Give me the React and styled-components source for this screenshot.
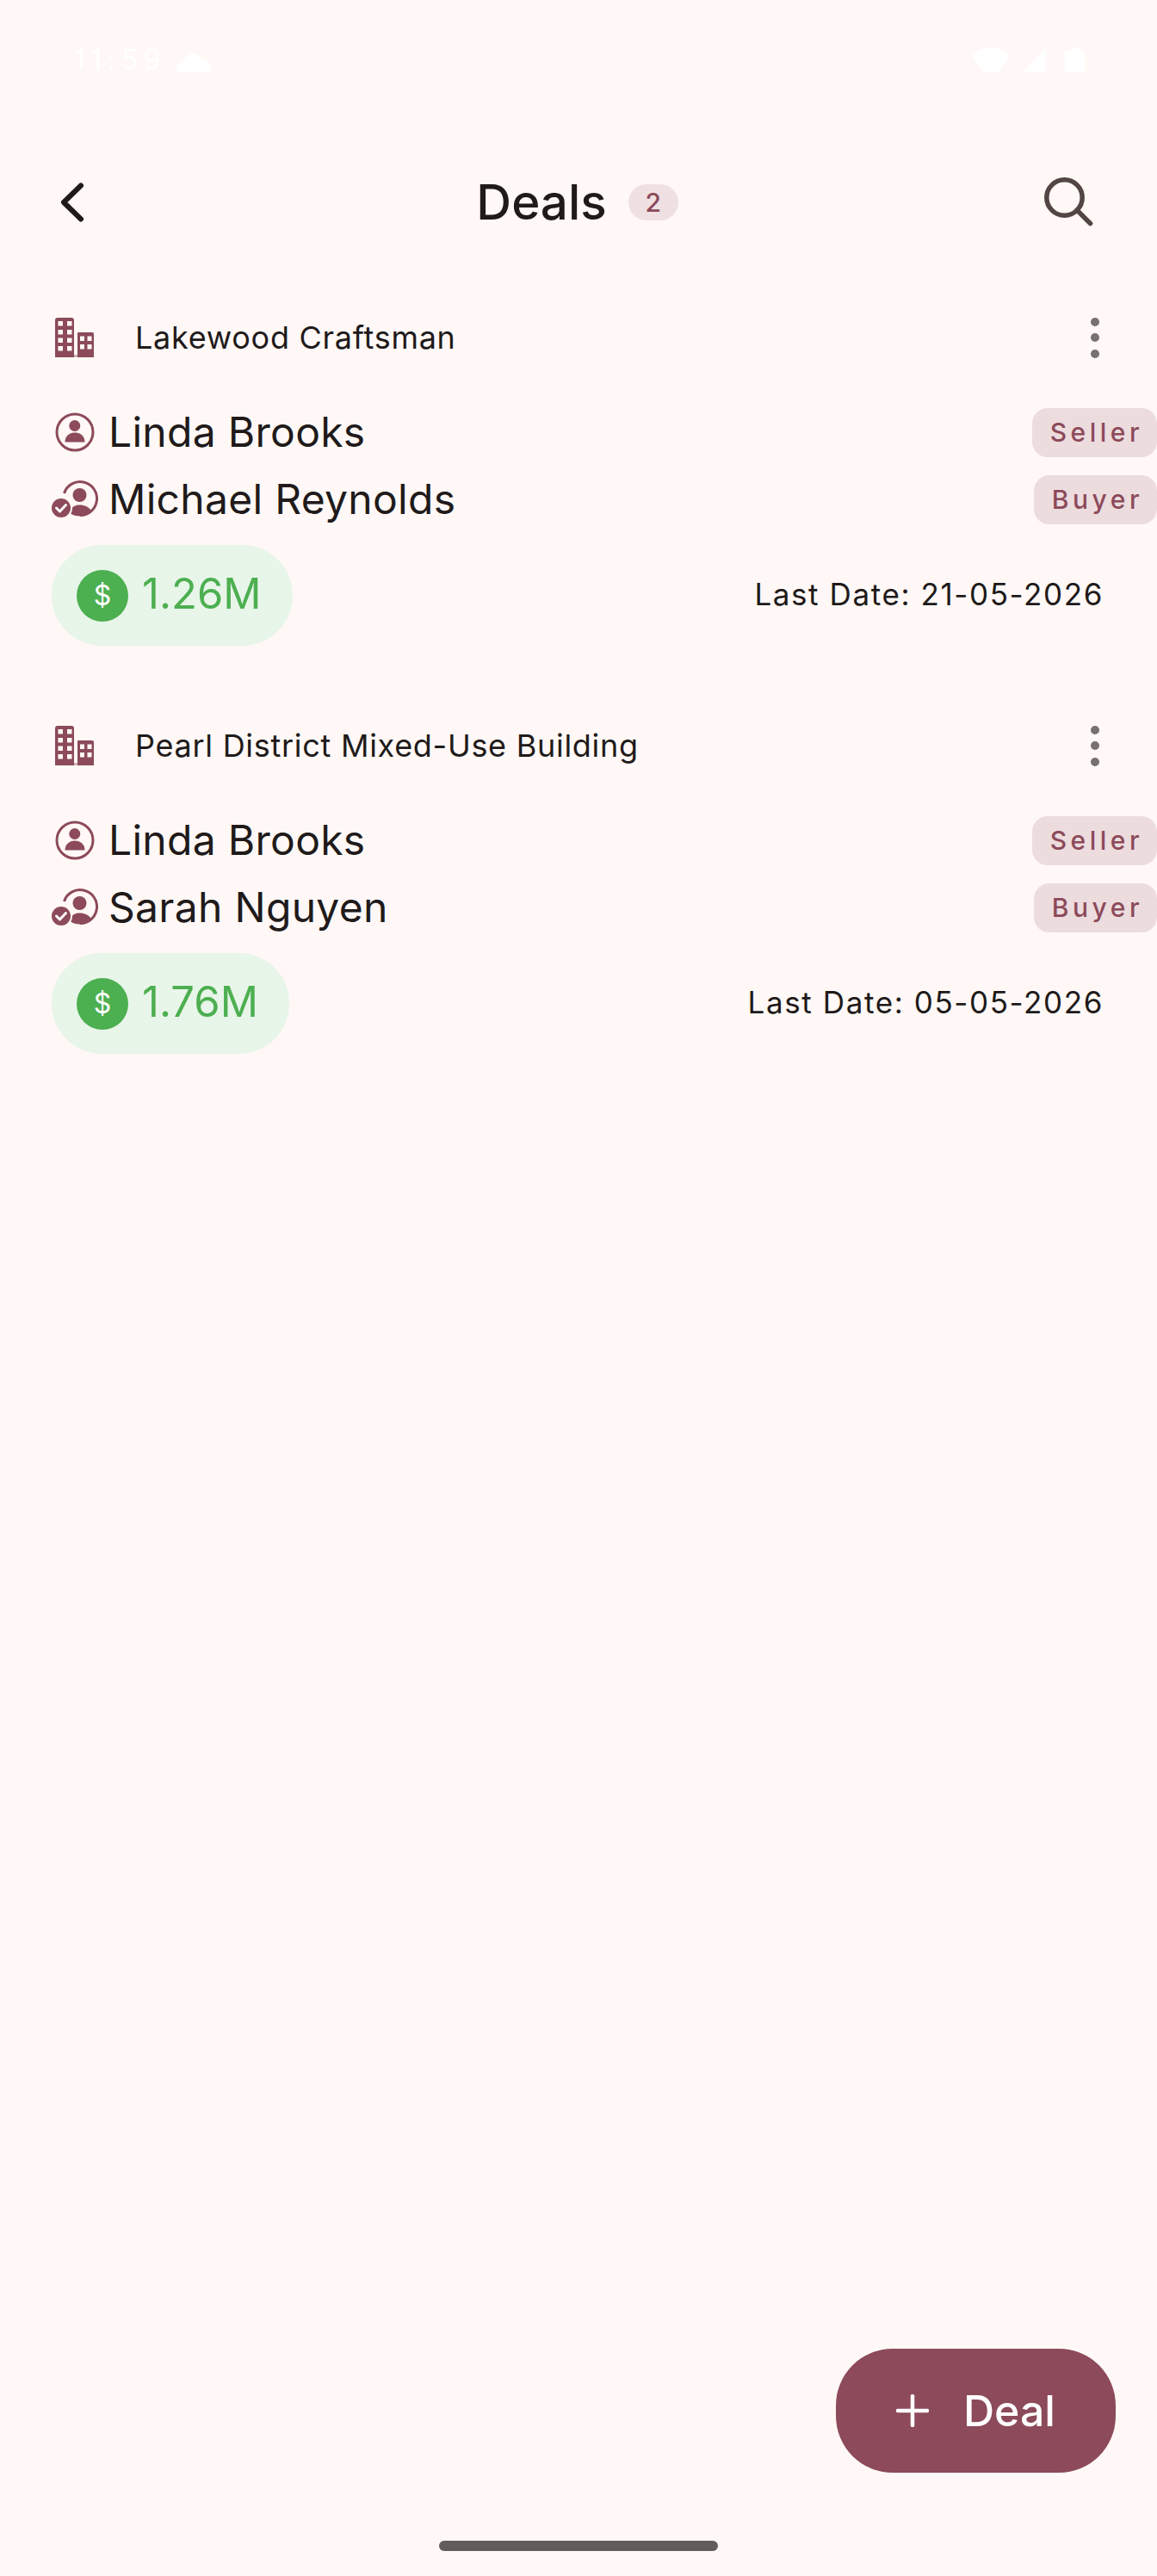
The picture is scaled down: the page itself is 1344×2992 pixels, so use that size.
import React from "react";
import styled, { createGlobalStyle } from "styled-components";

const GlobalStyle = createGlobalStyle`
  html, body {
    margin: 0;
    padding: 0;
    background: #fff8f6;
  }
  * {
    box-sizing: border-box;
  }
`;

const Page = styled.main`
  position: relative;
  width: 1344px;
  height: 2992px;
  overflow: hidden;
  display: flex;
  flex-direction: column;
  background: #fff8f6;
  color: #201a1a;
  font-family: Inter, "Noto Sans", sans-serif;
`;

const StatusBar = styled.div`
  height: 187px;
  padding: 55px 84px 0 86px;
  display: flex;
  justify-content: space-between;
  align-items: flex-start;
  color: #ffffff;
`;

const StatusGroup = styled.div`
  display: flex;
  align-items: flex-end;
  gap: ${(props) => props.$gap}px;
  height: 29px;
`;

const StatusTime = styled.span`
  font-size: 32px;
  letter-spacing: 6.5px;
  line-height: 29px;
`;

const Header = styled.header`
  height: 96px;
  padding: 0 73px 0 70px;
  display: grid;
  grid-template-columns: 1fr auto 1fr;
  align-items: center;
`;

const HeaderEnd = styled.div`
  display: flex;
  justify-content: ${(props) => (props.$end ? "flex-end" : "flex-start")};
`;

const TitleGroup = styled.div`
  display: flex;
  align-items: center;
  gap: 25px;
`;

const Title = styled.h1`
  margin: 0;
  font-size: 56.5px;
  font-weight: 500;
  line-height: 70px;
`;

const CountBadge = styled.span`
  width: 58px;
  height: 42px;
  border-radius: 21px;
  background: #efe0e2;
  color: #8c4a5a;
  display: flex;
  align-items: center;
  justify-content: center;
  font-size: 30px;
  font-weight: 500;
`;

const DealList = styled.section`
  margin-top: 79px;
  display: flex;
  flex-direction: column;
  gap: 86px;
`;

const Deal = styled.article`
  display: flex;
  flex-direction: column;
`;

const DealTitleRow = styled.div`
  height: 60px;
  padding: 0 67px 0 64px;
  display: flex;
  align-items: center;
`;

const DealName = styled.span`
  flex: 1;
  margin-left: 47px;
  font-size: 36px;
  letter-spacing: 0.72px;
`;

const MoreDots = styled.span`
  display: flex;
  flex-direction: column;
  gap: 8.5px;

  i {
    display: block;
    width: 10px;
    height: 10px;
    border-radius: 50%;
    background: #79716f;
  }
`;

const People = styled.div`
  margin-top: 41px;
  display: flex;
  flex-direction: column;
`;

const PersonRow = styled.div`
  height: 78px;
  display: flex;
  align-items: center;
`;

const PersonIconSlot = styled.span`
  width: 126px;
  padding-left: ${(props) => props.$inset}px;
  display: flex;
  align-items: center;
`;

const PersonName = styled.span`
  flex: 1;
  font-size: 48px;
  line-height: 60px;
  letter-spacing: 0.3px;
`;

const RoleBadge = styled.span`
  height: 57px;
  padding: 0 16px 0 21px;
  border-radius: 18px;
  background: #ecdcde;
  color: #8c4a5a;
  display: flex;
  align-items: center;
  font-size: 30px;
  font-weight: 500;
  letter-spacing: 4.5px;
`;

const DealFooter = styled.div`
  margin-top: 14px;
  padding: 0 62px 0 60px;
  display: flex;
  justify-content: space-between;
  align-items: center;
`;

const AmountPill = styled.div`
  height: 117px;
  padding: 0 36px 0 29px;
  border-radius: 58px;
  background: #e8f5e9;
  color: #4caf50;
  display: flex;
  align-items: center;
  gap: 16px;
  font-size: 49px;
`;

const AmountValue = styled.span`
  position: relative;
  top: -2px;
`;

const DollarCircle = styled.span`
  width: 60px;
  height: 60px;
  border-radius: 50%;
  background: #4caf50;
  color: #ffffff;
  display: flex;
  align-items: center;
  justify-content: center;
  font-size: 32px;
`;

const LastDate = styled.span`
  position: relative;
  top: -2px;
  font-size: 35px;
  letter-spacing: 1.6px;
`;

const Fab = styled.button`
  position: absolute;
  right: 48px;
  bottom: 120px;
  width: 325px;
  height: 144px;
  border: 0;
  border-radius: 66px;
  background: #8c4a5a;
  color: #ffffff;
  font-family: inherit;
  font-size: 50px;
  font-weight: 500;
  display: flex;
  align-items: center;
  justify-content: center;
  gap: 40px;
`;

const HomeBar = styled.div`
  position: absolute;
  left: 510px;
  bottom: 29px;
  width: 324px;
  height: 12px;
  border-radius: 6px;
  background: #625d5c;
`;

const Cloud = () => (
  <svg width="41" height="22" viewBox="0 0 41 22" fill="currentColor">
    <path d="M5 22a5 5 0 0 1-1-9.800C5 11 7 10 9 10 11 4 15 0 20 0c5 0 9 3 10.500 8 1-.5 2-.5 3-.500 3 0 5 2 5.500 5 1.500.7 2 2.500 2 4.500 0 3-2 5-5 5z" />
  </svg>
);

const Wifi = () => (
  <svg width="44" height="29" viewBox="0 0 44 29" fill="currentColor">
    <path d="M14 29 0 10C6 3.500 14 0 22 0s16 3.500 22 10L30 29z" />
  </svg>
);

const Signal = () => (
  <svg width="34" height="28" viewBox="0 0 34 28" fill="currentColor">
    <path d="M27 0v28H0z" />
  </svg>
);

const Battery = () => (
  <svg width="23" height="29" viewBox="0 0 23 29" fill="currentColor">
    <path d="M7 0h9v4h6a1 1 0 0 1 1 1v24H0V5a1 1 0 0 1 1-1h6z" />
  </svg>
);

const BackIcon = () => (
  <svg width="28" height="46" viewBox="0 0 28 46" fill="none" stroke="#201a1a" strokeWidth="6" strokeLinecap="round" strokeLinejoin="round">
    <path d="M24 3.500 4 23l20 19.500" />
  </svg>
);

const SearchIcon = () => (
  <svg width="58" height="58" viewBox="0 0 58 58" fill="none" stroke="#524543" strokeWidth="5.500" strokeLinecap="round">
    <circle cx="23.500" cy="23.500" r="20.700" />
    <path d="m38 38 15.500 15.500" />
  </svg>
);

const BuildingIcon = () => (
  <svg width="46" height="46" viewBox="0 0 46 46" fill="#8c4a5a">
    <path
      fillRule="evenodd"
      d="M3 0h16a3 3 0 0 1 3 3v43H0V3a3 3 0 0 1 3-3zM3.500 4v5.500H9V4zm10.500 0v5.500h5.500V4zM3.500 14v5.500H9V14zm10.500 0v5.500h5.500V14zM3.500 23.500V29H9v-5.500zm10.500 0V29h5.500v-5.500zM3.500 33v5.500H9V33zm10.500 0v5.500h5.500V33z"
    />
    <path
      fillRule="evenodd"
      d="M27 17h16a2 2 0 0 1 2 2v27H26V18a1 1 0 0 1 1-1zm2 4.500V27h5v-5.500zm8.500 0V27h5v-5.500zM29 31v5.500h5V31zm8.500 0v5.500h5V31z"
    />
    <rect x="22" y="43" width="4" height="3" opacity="0.4" />
  </svg>
);

const SellerIcon = () => (
  <svg width="46" height="46" viewBox="0 0 46 46" fill="#8c4a5a">
    <circle cx="23" cy="23" r="21" fill="none" stroke="#8c4a5a" strokeWidth="3" />
    <circle cx="22.800" cy="15.500" r="6.500" />
    <path d="M11.500 34.500c0-7 5-11 11.500-11s11.500 4 11.500 11z" />
  </svg>
);

const BuyerIcon = () => (
  <svg width="54" height="46" viewBox="0 0 54 46" fill="#8c4a5a">
    <path d="M14.500 16A19.500 19.500 0 1 1 33 41.500" fill="none" stroke="#8c4a5a" strokeWidth="3" />
    <circle cx="32.500" cy="18" r="8" />
    <path d="M20 38c3-6 7-8.500 12.500-8.500 6 0 10.500 2.500 14 7-3.500 3.500-8.500 6-13.500 6-5 0-9.500-1.500-13-4.500z" />
    <circle cx="11" cy="33" r="13" fill="#fff8f6" />
    <circle cx="11" cy="33" r="11" />
    <path d="m5.500 33 4 4 7-7.500" fill="none" stroke="#ffffff" strokeWidth="3" strokeLinecap="round" strokeLinejoin="round" />
  </svg>
);

const PlusIcon = () => (
  <svg width="38" height="38" viewBox="0 0 38 38" fill="none" stroke="#ffffff" strokeWidth="4.500" strokeLinecap="round">
    <path d="M19 2v34M2 19h34" />
  </svg>
);

const deals = [
  { name: "Lakewood Craftsman", seller: "Linda Brooks", buyer: "Michael Reynolds", amount: "1.26M", date: "21-05-2026" },
  { name: "Pearl District Mixed-Use Building", seller: "Linda Brooks", buyer: "Sarah Nguyen", amount: "1.76M", date: "05-05-2026" },
];

const App = () => {
  return (
    <Page>
      <GlobalStyle />
      <StatusBar>
        <StatusGroup $gap={11}>
          <StatusTime>11:59</StatusTime>
          <Cloud />
        </StatusGroup>
        <StatusGroup $gap={15}>
          <Wifi />
          <Signal />
          <Battery />
        </StatusGroup>
      </StatusBar>

      <Header>
        <HeaderEnd>
          <BackIcon />
        </HeaderEnd>
        <TitleGroup>
          <Title>Deals</Title>
          <CountBadge>2</CountBadge>
        </TitleGroup>
        <HeaderEnd $end>
          <SearchIcon />
        </HeaderEnd>
      </Header>

      <DealList>
        {deals.map((deal) => (
          <Deal key={deal.name}>
            <DealTitleRow>
              <BuildingIcon />
              <DealName>{deal.name}</DealName>
              <MoreDots>
                <i />
                <i />
                <i />
              </MoreDots>
            </DealTitleRow>
            <People>
              <PersonRow>
                <PersonIconSlot $inset={64}>
                  <SellerIcon />
                </PersonIconSlot>
                <PersonName>{deal.seller}</PersonName>
                <RoleBadge>Seller</RoleBadge>
              </PersonRow>
              <PersonRow>
                <PersonIconSlot $inset={60}>
                  <BuyerIcon />
                </PersonIconSlot>
                <PersonName>{deal.buyer}</PersonName>
                <RoleBadge>Buyer</RoleBadge>
              </PersonRow>
            </People>
            <DealFooter>
              <AmountPill>
                <DollarCircle>$</DollarCircle>
                <AmountValue>{deal.amount}</AmountValue>
              </AmountPill>
              <LastDate>Last Date: {deal.date}</LastDate>
            </DealFooter>
          </Deal>
        ))}
      </DealList>

      <Fab>
        <PlusIcon />
        Deal
      </Fab>
      <HomeBar />
    </Page>
  );
};

export default App;
